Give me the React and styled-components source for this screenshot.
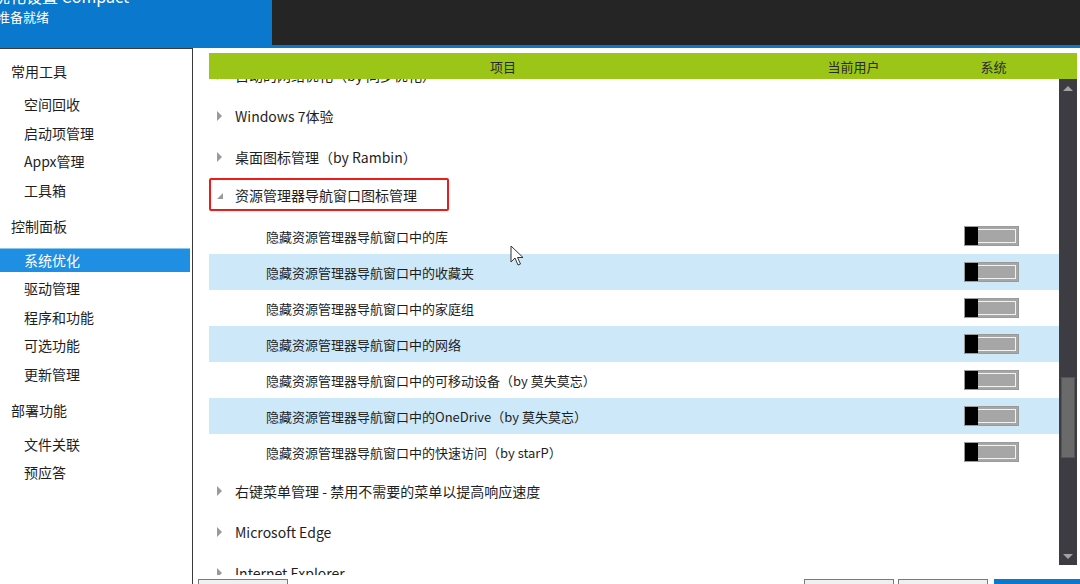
import React from "react";
import styled, { createGlobalStyle } from "styled-components";

const GlobalStyle = createGlobalStyle`
    html, body {
        margin: 0;
        padding: 0;
        overflow: hidden;
        background: #fff;
    }
    body {
        font-family: "Noto Sans CJK SC", "Noto Sans", sans-serif;
        color: #1e1e1e;
    }
`;

const Page = styled.div`
    width: 1080px;
    height: 584px;
    overflow: hidden;
    display: flex;
    flex-direction: column;
    position: relative;
`;

const TopBar = styled.div`
    display: flex;
    height: 48px;
    flex-shrink: 0;
`;

const TitleBlock = styled.div`
    width: 272px;
    background: #0a78cc;
    color: #fff;
    overflow: hidden;
    .title {
        font-size: 16px;
        line-height: 18px;
        margin-top: -13px;
        margin-left: -6px;
        white-space: nowrap;
    }
    .status {
        font-size: 13px;
        line-height: 16px;
        margin-top: 4px;
        margin-left: -3px;
    }
`;

const DarkBlock = styled.div`
    flex: 1;
    background: #252525;
    border-bottom: 3px solid #0a78cc;
    height: 45px;
`;

const Body = styled.div`
    flex: 1;
    display: flex;
    min-height: 0;
`;

const Sidebar = styled.div`
    width: 193px;
    border-right: 1px solid #3a3a3a;
    border-top: 1px solid #3a3a3a;
    padding-top: 8px;
    box-sizing: border-box;
    flex-shrink: 0;
`;

const SideHeading = styled.div`
    height: 28px;
    line-height: 28px;
    padding-left: 11px;
    font-size: 14px;
    margin-top: ${(p) => (p.first ? "0" : "10.3px")};
    margin-bottom: 7.3px;
`;

const SideItem = styled.div`
    height: 24px;
    line-height: 23px;
    margin: 0 2px 4.6px 0;
    padding-left: 24px;
    font-size: 14px;
    box-sizing: border-box;
    background: ${(p) => (p.active ? "#1f8fe3" : "transparent")};
    color: ${(p) => (p.active ? "#fff" : "#1e1e1e")};
    border-top: 1px solid ${(p) => (p.active ? "#8cc6ef" : "transparent")};
`;

const Main = styled.div`
    flex: 1;
    display: flex;
    flex-direction: column;
    padding: 5px 3px 0 5px;
    min-width: 0;
    overflow: hidden;
`;

const HeaderBar = styled.div`
    margin-left: 11px;
    height: 26px;
    flex-shrink: 0;
    background: #9bc617;
    display: grid;
    grid-template-columns: 588px 113px 1fr;
    align-items: center;
    font-size: 13px;
    color: #2a2a2a;
    position: relative;
    z-index: 2;
    span {
        text-align: center;
    }
`;

const ListArea = styled.div`
    margin-left: 11px;
    height: 486px;
    display: flex;
    align-items: flex-start;
    flex-shrink: 0;
`;

const List = styled.div`
    flex: 1;
    height: 496px;
    overflow: hidden;
`;

const ListInner = styled.div`
    margin-top: -25px;
`;

const GroupRow = styled.div`
    height: 41px;
    display: flex;
    align-items: center;
    padding-left: 8px;
    font-size: 14px;
    color: #1e1e1e;
`;

const Arrow = styled.span`
    width: 0;
    height: 0;
    margin-right: 12px;
    ${(p) =>
        p.open
            ? `border-left: 6px solid transparent;
               border-bottom: 6px solid #9a9a9a;
               margin-top: 3px;`
            : `border-top: 5px solid transparent;
               border-bottom: 5px solid transparent;
               border-left: 5px solid #9a9a9a;
               margin-right: 13px;`}
`;

const Marked = styled.div`
    display: flex;
    align-items: center;
    height: 33px;
    width: 240px;
    box-sizing: border-box;
    border: 2px solid #f01a1a;
    border-radius: 2px;
    margin-left: -8px;
    padding-left: 6px;
    margin-bottom: 6px;
`;

const ChildRow = styled.div`
    height: 36px;
    display: flex;
    align-items: center;
    justify-content: space-between;
    padding-left: 57px;
    padding-right: 40px;
    font-size: 13px;
    background: ${(p) => (p.alt ? "#cce8f9" : "#fff")};
`;

const Toggle = styled.div`
    width: 55px;
    height: 20px;
    box-sizing: border-box;
    display: flex;
    border: 1px solid #9a9a9a;
    background: #a6a6a6;
    .knob {
        width: 13px;
        background: #000;
    }
    .track {
        flex: 1;
        margin: 2px 2px 2px 0;
        border: 1px solid #f2f2f2;
        border-left: none;
        background: #a6a6a6;
    }
`;

const ScrollBar = styled.div`
    width: 18px;
    height: 486px;
    background: #3d3c42;
    display: flex;
    flex-direction: column;
    align-items: center;
    .up,
    .down {
        height: 18px;
        display: flex;
        align-items: center;
        justify-content: center;
    }
    .up::after {
        content: "";
        border-left: 5px solid transparent;
        border-right: 5px solid transparent;
        border-bottom: 5px solid #a3a3a3;
    }
    .down::after {
        content: "";
        border-left: 5px solid transparent;
        border-right: 5px solid transparent;
        border-top: 5px solid #a3a3a3;
    }
    .space {
        flex: 1;
        width: 100%;
        display: flex;
        flex-direction: column;
        align-items: center;
    }
`;

const Thumb = styled.div`
    width: 14px;
    height: 81px;
    margin-top: 280px;
    background: #6a6a6a;
    border: 1px solid #555;
    box-sizing: border-box;
`;

const ButtonRow = styled.div`
    display: flex;
    flex-shrink: 0;
    margin-top: 14px;
    margin-right: -3px;
    gap: 4px;
    .spacer {
        flex: 1;
    }
`;

const Button = styled.div`
    width: ${(p) => (p.wide ? "86px" : "90px")};
    height: 28px;
    box-sizing: border-box;
    border: 1px solid ${(p) => (p.primary ? "#0a78cc" : "#7a7a7a")};
    border-top-width: ${(p) => (p.primary ? "2px" : "1px")};
    background: ${(p) => (p.primary ? "#0a78cc" : "#f0f0f0")};
    margin-left: ${(p) => (p.gapLeft ? "2px" : "0")};
`;

const Cursor = styled.svg`
    position: absolute;
    left: 510px;
    top: 245px;
    z-index: 5;
`;

const children = [
    "隐藏资源管理器导航窗口中的库",
    "隐藏资源管理器导航窗口中的收藏夹",
    "隐藏资源管理器导航窗口中的家庭组",
    "隐藏资源管理器导航窗口中的网络",
    "隐藏资源管理器导航窗口中的可移动设备（by 莫失莫忘）",
    "隐藏资源管理器导航窗口中的OneDrive（by 莫失莫忘）",
    "隐藏资源管理器导航窗口中的快速访问（by starP）",
];

const sidebar = [
    { title: "常用工具", items: ["空间回收", "启动项管理", "Appx管理", "工具箱"] },
    { title: "控制面板", items: ["系统优化", "驱动管理", "程序和功能", "可选功能", "更新管理"] },
    { title: "部署功能", items: ["文件关联", "预应答"] },
];

const App = () => {
    return (
        <Page>
            <GlobalStyle />
            <TopBar>
                <TitleBlock>
                    <div className="title">优化设置 Compact</div>
                    <div className="status">准备就绪</div>
                </TitleBlock>
                <DarkBlock />
            </TopBar>
            <Body>
                <Sidebar>
                    {sidebar.map((sec, i) => (
                        <div key={sec.title}>
                            <SideHeading first={i === 0}>{sec.title}</SideHeading>
                            {sec.items.map((it) => (
                                <SideItem key={it} active={it === "系统优化"}>
                                    {it}
                                </SideItem>
                            ))}
                        </div>
                    ))}
                </Sidebar>
                <Main>
                    <HeaderBar>
                        <span>项目</span>
                        <span>当前用户</span>
                        <span>系统</span>
                    </HeaderBar>
                    <ListArea>
                        <List>
                            <ListInner>
                                <GroupRow>
                                    <Arrow />
                                    自动的网络优化（by 同步优化）
                                </GroupRow>
                                <GroupRow>
                                    <Arrow />
                                    Windows 7体验
                                </GroupRow>
                                <GroupRow>
                                    <Arrow />
                                    桌面图标管理（by Rambin）
                                </GroupRow>
                                <GroupRow>
                                    <Marked>
                                        <Arrow open />
                                        资源管理器导航窗口图标管理
                                    </Marked>
                                </GroupRow>
                                {children.map((c, i) => (
                                    <ChildRow key={c} alt={i % 2 === 1}>
                                        <span>{c}</span>
                                        <Toggle>
                                            <div className="knob" />
                                            <div className="track" />
                                        </Toggle>
                                    </ChildRow>
                                ))}
                                <GroupRow>
                                    <Arrow />
                                    右键菜单管理 - 禁用不需要的菜单以提高响应速度
                                </GroupRow>
                                <GroupRow>
                                    <Arrow />
                                    Microsoft Edge
                                </GroupRow>
                                <GroupRow>
                                    <Arrow />
                                    Internet Explorer
                                </GroupRow>
                            </ListInner>
                        </List>
                        <ScrollBar>
                            <div className="up" />
                            <div className="space">
                                <Thumb />
                            </div>
                            <div className="down" />
                        </ScrollBar>
                    </ListArea>
                    <ButtonRow>
                        <Button />
                        <div className="spacer" />
                        <Button />
                        <Button />
                        <Button primary wide gapLeft />
                    </ButtonRow>
                </Main>
            </Body>
            <Cursor width="14" height="22" viewBox="0 0 14 22">
                <path
                    d="M1 1 L1 17 L5 13 L8 20 L10.5 19 L7.5 12.5 L13 12.5 Z"
                    fill="#fff"
                    stroke="#333"
                    strokeWidth="1"
                    strokeLinejoin="round"
                />
            </Cursor>
        </Page>
    );
};

export default App;
